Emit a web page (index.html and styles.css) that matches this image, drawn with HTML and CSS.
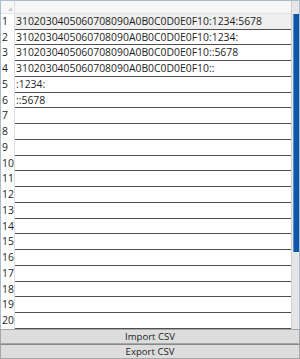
FILE: index.html
```html
<!DOCTYPE html>
<html lang="en">

<head>
    <meta charset="UTF-8">
    <meta name="viewport" content="width=device-width, initial-scale=1.0">
    <title>CSV grid</title>
    <link rel="stylesheet" href="styles.css">
</head>

<body>
    <div class="grid">
        <div class="table">
            <div class="row head">
                <div class="num corner"><span class="tri"></span></div>
                <div class="cell"></div>
            </div>
            <div class="row current">
                <div class="num">1</div>
                <div class="cell">3102030405060708090A0B0C0D0E0F10:1234:5678</div>
            </div>
            <div class="row">
                <div class="num">2</div>
                <div class="cell">3102030405060708090A0B0C0D0E0F10:1234:</div>
            </div>
            <div class="row">
                <div class="num">3</div>
                <div class="cell">3102030405060708090A0B0C0D0E0F10::5678</div>
            </div>
            <div class="row">
                <div class="num">4</div>
                <div class="cell">3102030405060708090A0B0C0D0E0F10::</div>
            </div>
            <div class="row">
                <div class="num">5</div>
                <div class="cell">:1234:</div>
            </div>
            <div class="row">
                <div class="num">6</div>
                <div class="cell">::5678</div>
            </div>
            <div class="row"><div class="num">7</div><div class="cell"></div></div>
            <div class="row"><div class="num">8</div><div class="cell"></div></div>
            <div class="row"><div class="num">9</div><div class="cell"></div></div>
            <div class="row"><div class="num">10</div><div class="cell"></div></div>
            <div class="row"><div class="num">11</div><div class="cell"></div></div>
            <div class="row"><div class="num">12</div><div class="cell"></div></div>
            <div class="row"><div class="num">13</div><div class="cell"></div></div>
            <div class="row"><div class="num">14</div><div class="cell"></div></div>
            <div class="row"><div class="num">15</div><div class="cell"></div></div>
            <div class="row"><div class="num">16</div><div class="cell"></div></div>
            <div class="row"><div class="num">17</div><div class="cell"></div></div>
            <div class="row"><div class="num">18</div><div class="cell"></div></div>
            <div class="row"><div class="num">19</div><div class="cell"></div></div>
            <div class="row"><div class="num">20</div><div class="cell"></div></div>
        </div>
        <div class="scrollbar">
            <div class="thumb"></div>
        </div>
    </div>
    <button class="btn">Import CSV</button>
    <button class="btn">Export CSV</button>
</body>

</html>
```

FILE: styles.css
```css
html,
body {
    margin: 0;
    padding: 0;
    width: 300px;
    height: 359px;
    overflow: hidden;
    background: #f0f0f0;
    font-family: "Open Sans", "Noto Sans", sans-serif;
}

.grid {
    display: flex;
    height: 329px;
    box-sizing: border-box;
    border: 1px solid #a9bcd0;
    border-bottom: none;
    background: #ffffff;
}

.table {
    flex: 1;
    display: flex;
    flex-direction: column;
}

.row {
    display: flex;
    height: 15.8px;
}

.row.head {
    height: 13px;
    background: #f7f7f7;
}

.row.head .cell {
    border-bottom: 1px solid #e4e4e4;
    background: #f7f7f7;
}

.row.current .cell {
    background: #efefef;
}

.num {
    width: 14px;
    flex: none;
    border-right: 1px solid #d8dfe8;
    background: #ffffff;
    font-size: 10.4px;
    line-height: 15px;
    color: #1e1e1e;
    padding-left: 1px;
    box-sizing: border-box;
    position: relative;
    white-space: nowrap;
}

.corner {
    background: #f7f7f7;
    border-bottom: 1px solid #e4e4e4;
}

.tri {
    position: absolute;
    right: 2px;
    bottom: 2px;
    width: 0;
    height: 0;
    border-left: 4px solid transparent;
    border-bottom: 4px solid #c8c8c8;
}

.cell {
    flex: 1;
    box-sizing: border-box;
    border-bottom: 1px solid #505050;
    font-size: 10.4px;
    line-height: 14px;
    color: #1e1e1e;
    padding-left: 1px;
    white-space: nowrap;
    overflow: hidden;
}

.scrollbar {
    width: 8px;
    flex: none;
    background: #e6e6e6;
    border-left: 1px solid #d0d0d0;
    padding-top: 13px;
    box-sizing: border-box;
}

.thumb {
    height: 238px;
    margin: 0 0 0 1px;
    background: #0c58a6;
    border-left: 1px solid #5d8fc6;
}

.btn {
    display: block;
    width: 300px;
    height: 15px;
    margin: 0;
    padding: 0;
    border: 1px solid #a6a6a6;
    background: #dddddd;
    font-family: "Open Sans", "Noto Sans", sans-serif;
    font-size: 9.6px;
    line-height: 12px;
    color: #1e1e1e;
    text-align: center;
}

.btn + .btn {
    border-top: 1px solid #888888;
}
```
